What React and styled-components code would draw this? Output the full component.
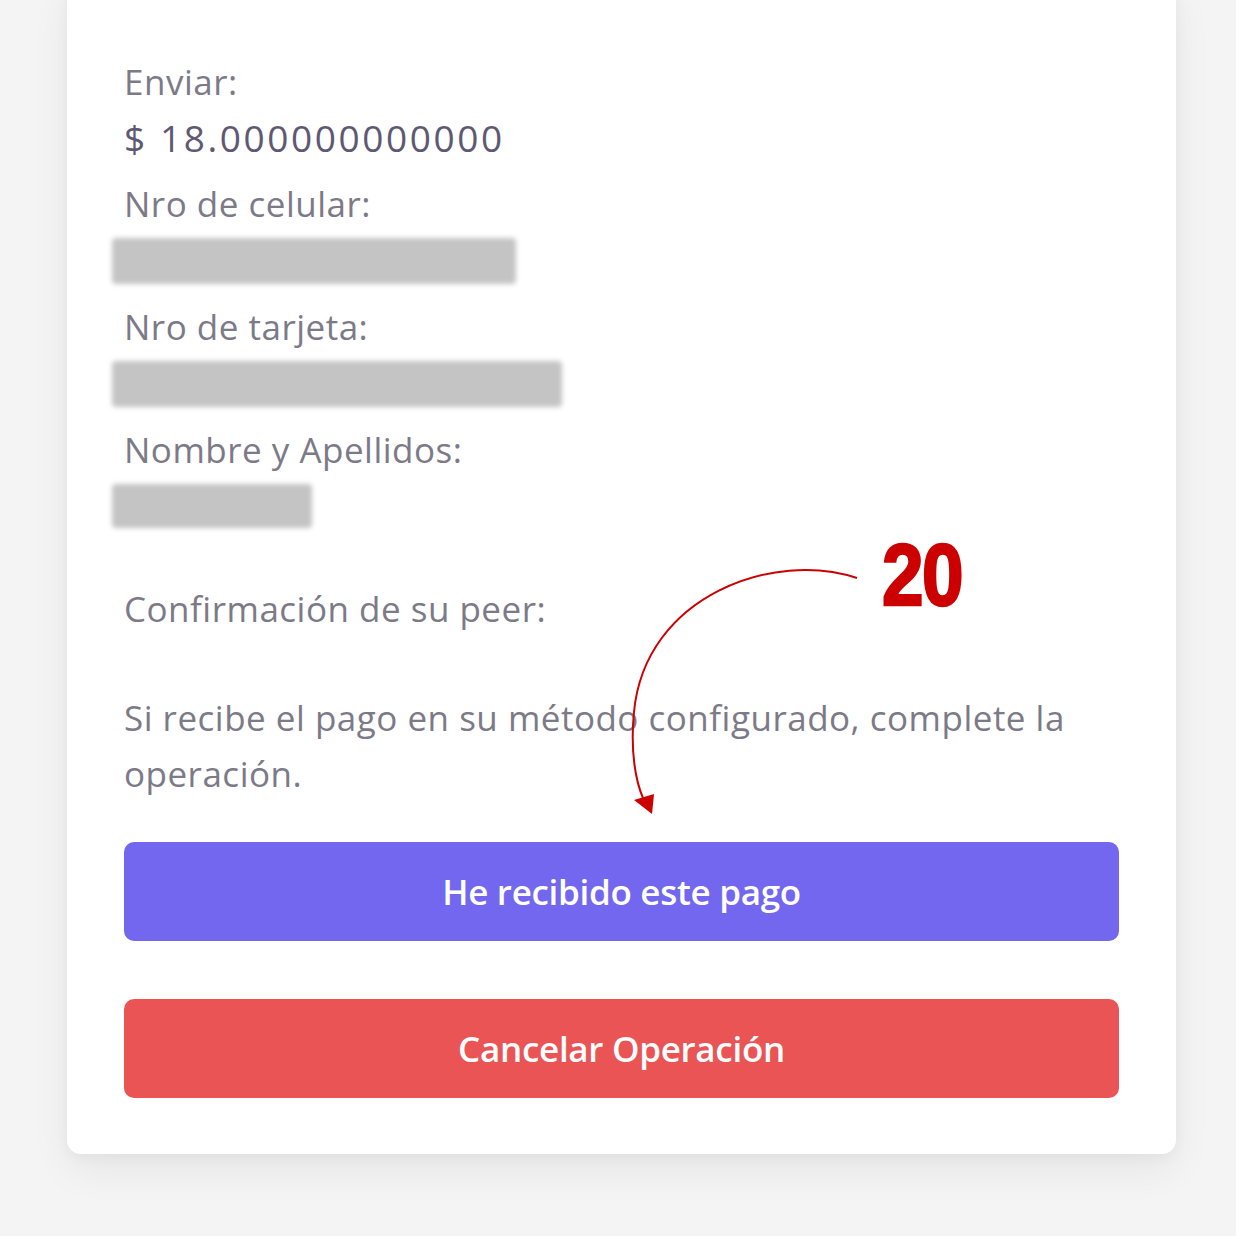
import React from "react";
import styled, { createGlobalStyle } from "styled-components";

const GlobalStyle = createGlobalStyle`
  html, body {
    margin: 0;
    padding: 0;
    background: #f4f4f4;
  }
  body {
    font-family: "Open Sans", "Noto Sans", sans-serif;
  }
`;

const Page = styled.div`
  position: relative;
  width: 1236px;
  height: 1236px;
  overflow: hidden;
  padding-left: 67px;
  box-sizing: border-box;
`;

const Card = styled.div`
  width: 1109px;
  margin-top: -20px;
  padding: 74px 57px 56px;
  box-sizing: border-box;
  background: #ffffff;
  border-radius: 14px;
  box-shadow: 0 16px 40px rgba(0, 0, 0, 0.06), 0 4px 14px rgba(0, 0, 0, 0.04);
`;

const Field = styled.div`
  display: flex;
  flex-direction: column;
  margin-bottom: ${(p) => p.gap || 0}px;
`;

const Label = styled.div`
  font-size: 35px;
  line-height: 56px;
  letter-spacing: 0.5px;
  color: #7d7a88;
`;

const Amount = styled.div`
  font-size: 37px;
  line-height: 56px;
  color: #5e5873;
  letter-spacing: 2.6px;
`;

const Redacted = styled.div`
  width: ${(p) => p.w}px;
  height: ${(p) => p.h || 44}px;
  margin: 6px 0 0 -12px;
  background: #c4c4c4;
  border-radius: 4px;
  filter: blur(2.5px);
`;

const Paragraph = styled.p`
  margin: 53px 0 40px;
  font-size: 35px;
  line-height: 56px;
  letter-spacing: 0.5px;
  color: #7d7a88;
`;

const Actions = styled.div`
  display: flex;
  flex-direction: column;
  gap: 58px;
`;

const Button = styled.button`
  height: 99px;
  width: 100%;
  border: none;
  border-radius: 10px;
  background: ${(p) => (p.danger ? "#ea5455" : "#7367f0")};
  color: #ffffff;
  font-family: "Open Sans", "Noto Sans", sans-serif;
  font-size: 35px;
  font-weight: 600;
  letter-spacing: -0.3px;
  cursor: pointer;
`;

const Overlay = styled.svg`
  position: absolute;
  left: 0;
  top: 0;
  pointer-events: none;
`;

const Step = styled.span`
  position: absolute;
  left: 882px;
  top: 531px;
  font-family: "Liberation Sans", Arial, sans-serif;
  font-weight: 700;
  font-size: 88px;
  line-height: 1;
  color: #cc0000;
  transform: scaleX(0.85);
  transform-origin: left top;
  -webkit-text-stroke: 2.5px #cc0000;
  letter-spacing: -2px;
`;

export default function App() {
  return (
    <>
      <GlobalStyle />
      <Page>
        <Card>
          <Field gap={10}>
            <Label>Enviar:</Label>
            <Amount>$ 18.000000000000</Amount>
          </Field>
          <Field gap={15}>
            <Label>Nro de celular:</Label>
            <Redacted w={404} h={46} />
          </Field>
          <Field gap={15}>
            <Label>Nro de tarjeta:</Label>
            <Redacted w={450} h={46} />
          </Field>
          <Field gap={53}>
            <Label>Nombre y Apellidos:</Label>
            <Redacted w={200} h={44} />
          </Field>
          <Label>Confirmación de su peer:</Label>
          <Paragraph>
            Si recibe el pago en su método configurado, complete la operación.
          </Paragraph>
          <Actions>
            <Button>He recibido este pago</Button>
            <Button danger>Cancelar Operación</Button>
          </Actions>
        </Card>
        <Overlay width="1236" height="1236" viewBox="0 0 1236 1236">
          <path
            d="M857 578 C775 550 645 595 634 712 C630 752 636 782 643 798"
            fill="none"
            stroke="#cc0000"
            strokeWidth="2"
          />
          <path d="M634 800 L654 794 L652 814 Z" fill="#cc0000" />
        </Overlay>
        <Step>20</Step>
      </Page>
    </>
  );
}
